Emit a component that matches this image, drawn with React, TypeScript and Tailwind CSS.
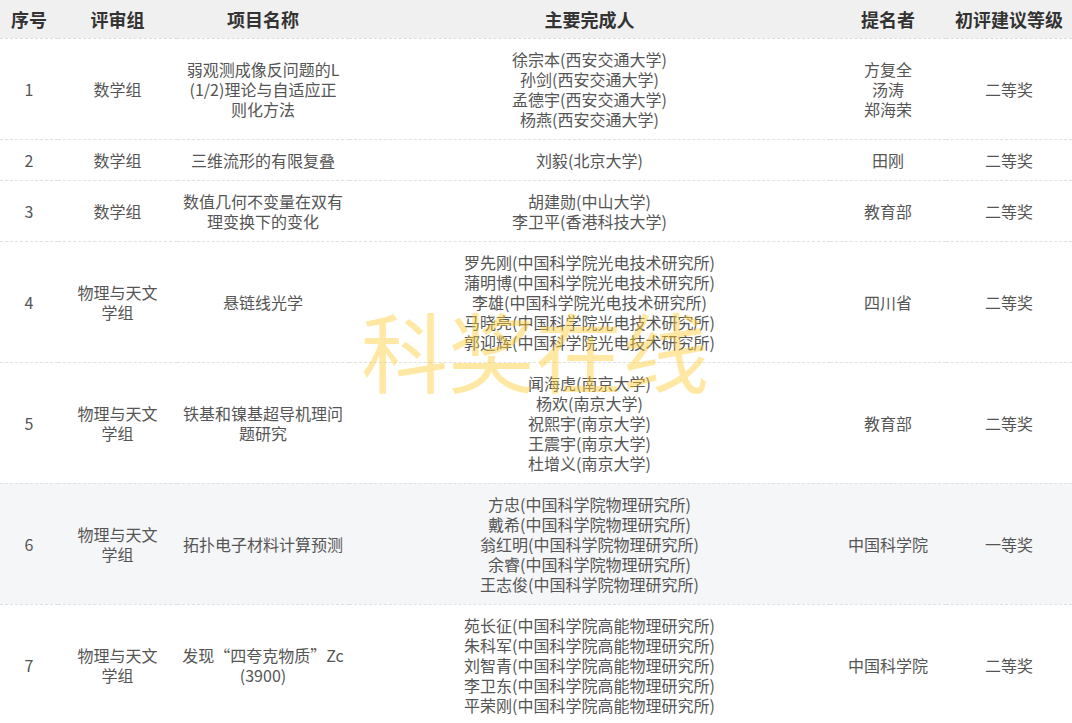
type Row = {
  no: string;
  group: string[];
  name: string[];
  people: string[];
  nominator: string[];
  level: string;
  highlight?: boolean;
};

const rows: Row[] = [
  {
    no: "1",
    group: ["数学组"],
    name: ["弱观测成像反问题的L", "(1/2)理论与自适应正", "则化方法"],
    people: [
      "徐宗本(西安交通大学)",
      "孙剑(西安交通大学)",
      "孟德宇(西安交通大学)",
      "杨燕(西安交通大学)",
    ],
    nominator: ["方复全", "汤涛", "郑海荣"],
    level: "二等奖",
  },
  {
    no: "2",
    group: ["数学组"],
    name: ["三维流形的有限复叠"],
    people: ["刘毅(北京大学)"],
    nominator: ["田刚"],
    level: "二等奖",
  },
  {
    no: "3",
    group: ["数学组"],
    name: ["数值几何不变量在双有", "理变换下的变化"],
    people: ["胡建勋(中山大学)", "李卫平(香港科技大学)"],
    nominator: ["教育部"],
    level: "二等奖",
  },
  {
    no: "4",
    group: ["物理与天文", "学组"],
    name: ["悬链线光学"],
    people: [
      "罗先刚(中国科学院光电技术研究所)",
      "蒲明博(中国科学院光电技术研究所)",
      "李雄(中国科学院光电技术研究所)",
      "马晓亮(中国科学院光电技术研究所)",
      "郭迎辉(中国科学院光电技术研究所)",
    ],
    nominator: ["四川省"],
    level: "二等奖",
  },
  {
    no: "5",
    group: ["物理与天文", "学组"],
    name: ["铁基和镍基超导机理问", "题研究"],
    people: [
      "闻海虎(南京大学)",
      "杨欢(南京大学)",
      "祝熙宇(南京大学)",
      "王震宇(南京大学)",
      "杜增义(南京大学)",
    ],
    nominator: ["教育部"],
    level: "二等奖",
  },
  {
    no: "6",
    group: ["物理与天文", "学组"],
    name: ["拓扑电子材料计算预测"],
    people: [
      "方忠(中国科学院物理研究所)",
      "戴希(中国科学院物理研究所)",
      "翁红明(中国科学院物理研究所)",
      "余睿(中国科学院物理研究所)",
      "王志俊(中国科学院物理研究所)",
    ],
    nominator: ["中国科学院"],
    level: "一等奖",
    highlight: true,
  },
  {
    no: "7",
    group: ["物理与天文", "学组"],
    name: ["发现“四夸克物质”Zc", "(3900)"],
    people: [
      "苑长征(中国科学院高能物理研究所)",
      "朱科军(中国科学院高能物理研究所)",
      "刘智青(中国科学院高能物理研究所)",
      "李卫东(中国科学院高能物理研究所)",
      "平荣刚(中国科学院高能物理研究所)",
    ],
    nominator: ["中国科学院"],
    level: "二等奖",
  },
];

function Lines({ items }: { items: string[] }) {
  return (
    <>
      {items.map((t, i) => (
        <div key={i} className="whitespace-nowrap">
          {t}
        </div>
      ))}
    </>
  );
}

export default function App() {
  const font = {
    fontFamily: '"Noto Sans CJK SC", "Noto Sans", sans-serif',
  };
  return (
    <div className="relative w-[1072px] h-[723px] overflow-hidden bg-white" style={font}>
      <table className="w-[1072px] table-fixed border-collapse text-center text-[16px] leading-[20px] text-[#555]">
        <colgroup>
          <col className="w-[58px]" />
          <col className="w-[119px]" />
          <col className="w-[172px]" />
          <col className="w-[481px]" />
          <col className="w-[116px]" />
          <col className="w-[126px]" />
        </colgroup>
        <thead>
          <tr className="bg-[#f0f0f0] text-[18px] font-bold text-[#333]">
            <th className="h-[38px] border-b border-dashed border-[#dcdcdc] p-0">序号</th>
            <th className="border-b border-dashed border-[#dcdcdc] p-0">评审组</th>
            <th className="border-b border-dashed border-[#dcdcdc] p-0">项目名称</th>
            <th className="border-b border-dashed border-[#dcdcdc] p-0">主要完成人</th>
            <th className="border-b border-dashed border-[#dcdcdc] p-0">提名者</th>
            <th className="border-b border-dashed border-[#dcdcdc] p-0">初评建议等级</th>
          </tr>
        </thead>
        <tbody>
          {rows.map((r) => (
            <tr
              key={r.no}
              className={r.highlight ? "bg-[#f5f6f8]" : "bg-white"}
            >
              <td className="border-b border-dashed border-[#e2e2e2] py-[10px] align-middle">
                {r.no}
              </td>
              <td className="border-b border-dashed border-[#e2e2e2] py-[10px] align-middle">
                <Lines items={r.group} />
              </td>
              <td className="border-b border-dashed border-[#e2e2e2] py-[10px] align-middle">
                <Lines items={r.name} />
              </td>
              <td className="border-b border-dashed border-[#e2e2e2] py-[10px] align-middle">
                <Lines items={r.people} />
              </td>
              <td className="border-b border-dashed border-[#e2e2e2] py-[10px] align-middle">
                <Lines items={r.nominator} />
              </td>
              <td className="border-b border-dashed border-[#e2e2e2] py-[10px] align-middle">
                {r.level}
              </td>
            </tr>
          ))}
        </tbody>
      </table>
      <div className="pointer-events-none absolute left-[361px] top-[306px] whitespace-nowrap text-[87px] leading-none text-[rgba(255,204,51,0.45)]">
        科奖在线
      </div>
    </div>
  );
}
